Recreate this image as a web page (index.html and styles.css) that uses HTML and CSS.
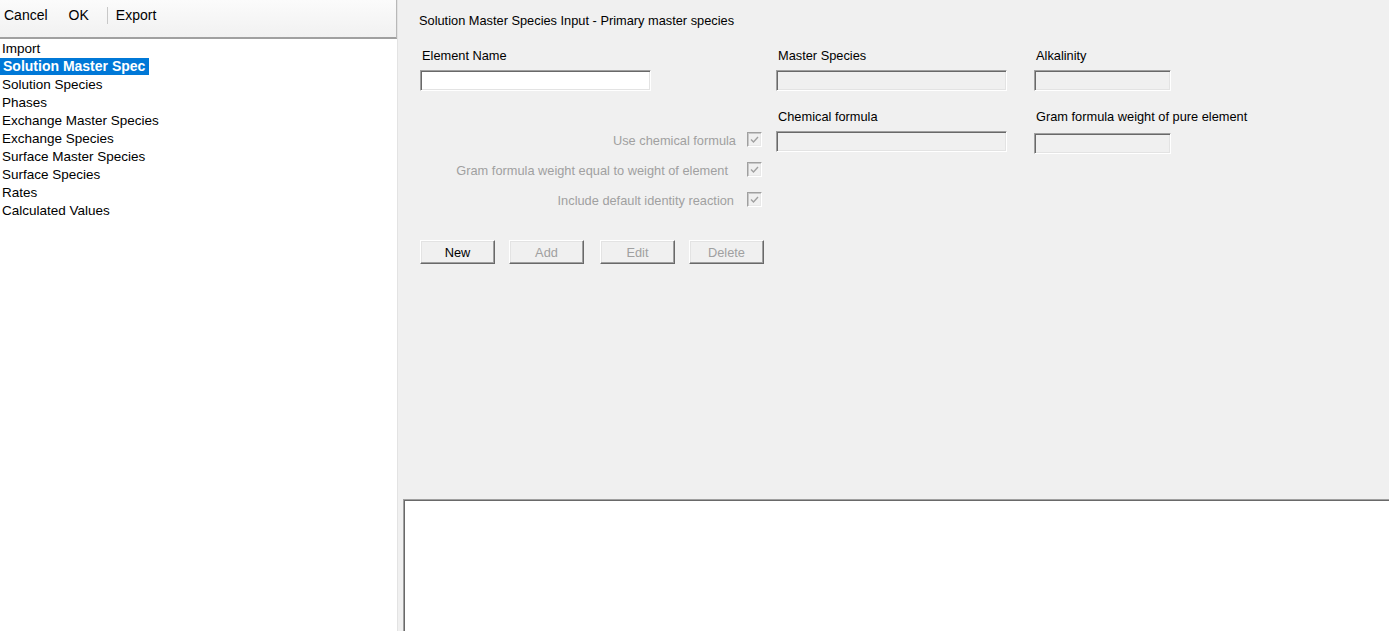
FILE: index.html
```html
<!DOCTYPE html>
<html>
<head>
<meta charset="utf-8">
<link rel="stylesheet" href="styles.css">
</head>
<body>
<div class="app">
  <aside class="side">
    <div class="toolbar">
      <span class="tb-item tb-cancel">Cancel</span>
      <span class="tb-item tb-ok">OK</span>
      <span class="tb-sep"></span>
      <span class="tb-item tb-export">Export</span>
    </div>
    <ul class="tree">
      <li class="tree-item">Import</li>
      <li class="tree-item"><span class="tree-sel">Solution Master Spec</span></li>
      <li class="tree-item">Solution Species</li>
      <li class="tree-item">Phases</li>
      <li class="tree-item">Exchange Master Species</li>
      <li class="tree-item">Exchange Species</li>
      <li class="tree-item">Surface Master Species</li>
      <li class="tree-item">Surface Species</li>
      <li class="tree-item">Rates</li>
      <li class="tree-item">Calculated Values</li>
    </ul>
  </aside>
  <main class="pane">
    <section class="form">
      <div class="title">Solution Master Species Input - Primary master species</div>
      <div class="row row-1">
        <div class="field">
          <div class="label">Element Name</div>
          <div class="input input-wide"></div>
        </div>
        <div class="field">
          <div class="label">Master Species</div>
          <div class="input input-wide input-disabled"></div>
        </div>
        <div class="field">
          <div class="label">Alkalinity</div>
          <div class="input input-narrow input-disabled"></div>
        </div>
      </div>
      <div class="row row-2">
        <div class="checks">
          <div class="check check-a"><span class="check-label">Use chemical formula</span><span class="box"><svg viewBox="0 0 9 9" width="9" height="9"><path d="M1 4.5 L3.5 7 L8 2" fill="none" stroke="#a0a0a0" stroke-width="1.4"/></svg></span></div>
          <div class="check check-b"><span class="check-label">Gram formula weight equal to weight of element</span><span class="box"><svg viewBox="0 0 9 9" width="9" height="9"><path d="M1 4.5 L3.5 7 L8 2" fill="none" stroke="#a0a0a0" stroke-width="1.4"/></svg></span></div>
          <div class="check check-c"><span class="check-label">Include default identity reaction</span><span class="box"><svg viewBox="0 0 9 9" width="9" height="9"><path d="M1 4.5 L3.5 7 L8 2" fill="none" stroke="#a0a0a0" stroke-width="1.4"/></svg></span></div>
        </div>
        <div class="field field-2">
          <div class="label">Chemical formula</div>
          <div class="input input-wide input-disabled"></div>
        </div>
        <div class="field field-2 field-gfw">
          <div class="label">Gram formula weight of pure element</div>
          <div class="input input-narrow input-disabled"></div>
        </div>
      </div>
      <div class="buttons">
        <span class="btn">New</span>
        <span class="btn btn-off">Add</span>
        <span class="btn btn-off btn-edit">Edit</span>
        <span class="btn btn-off">Delete</span>
      </div>
    </section>
    <section class="output"></section>
  </main>
</div>
</body>
</html>
```

FILE: styles.css
```css
html, body {
  margin: 0;
  padding: 0;
  height: 100%;
  overflow: hidden;
}
body {
  font-family: "Liberation Sans", Arial, sans-serif;
  font-size: 13px;
  color: #000;
  background: #f0f0f0;
}
.app {
  display: flex;
  height: 631px;
}
.side {
  width: 397px;
  flex: none;
  background: #fff;
  border-right: 1px solid #e3e3e3;
  display: flex;
  flex-direction: column;
}
.toolbar {
  box-sizing: border-box;
  height: 39px;
  padding: 6px 0 0 4px;
  display: flex;
  align-items: flex-start;
  background: linear-gradient(#fbfbfb, #f1f1f1);
  border-bottom: 2px solid #a0a0a0;
  border-right: 1px solid #b8b8b8;
}
.tb-item {
  font-size: 14px;
  line-height: 18px;
  color: #000;
}
.tb-cancel { margin-right: 21px; }
.tb-ok { margin-right: 18px; }
.tb-sep {
  width: 1px;
  height: 17px;
  margin-top: 1px;
  background: #c8c8c8;
  margin-right: 8px;
}
.tree {
  list-style: none;
  margin: 0;
  padding: 1px 0 0 0;
  font-size: 13.5px;
}
.tree-item {
  height: 18px;
  line-height: 18px;
  padding-left: 2px;
  white-space: nowrap;
}
.tree-sel {
  display: inline-block;
  box-sizing: border-box;
  margin-left: -2px;
  padding: 0 1px 0 3px;
  min-width: 149px;
  height: 17px;
  margin-top: 0;
  line-height: 17px;
  background: #0078d7;
  color: #fff;
  font-weight: bold;
  font-size: 14px;
  vertical-align: top;
}
.pane {
  flex: 1;
  display: flex;
  flex-direction: column;
  background: #f0f0f0;
}
.form {
  flex: 1;
  padding: 13px 0 0 22px;
  font-size: 12.8px;
}
.title {
  line-height: 15px;
  height: 15px;
  margin-left: -1px;
}
.row {
  display: grid;
  grid-template-columns: 356px 258px 1fr;
}
.row-1 { margin-top: 20px; }
.label {
  line-height: 15px;
  height: 15px;
  padding-left: 2px;
}
.input {
  box-sizing: border-box;
  height: 21px;
  margin-top: 7px;
  background: #fff;
  border-top: 1px solid #a0a0a0;
  border-left: 1px solid #a0a0a0;
  border-bottom: 1px solid #fff;
  border-right: 1px solid #fff;
  box-shadow: inset 1px 1px 0 #696969, inset -1px -1px 0 #e3e3e3;
}
.input-wide { width: 231px; }
.input-narrow { width: 137px; }
.input-disabled { background: #f0f0f0; }
.field-2 .label { margin-top: 18px; }
.field-gfw .input { margin-top: 9px; }
.checks {
  padding-top: 42px;
  padding-right: 14px;
  display: flex;
  flex-direction: column;
  gap: 15px;
}
.check {
  display: flex;
  justify-content: flex-end;
  align-items: center;
  height: 15px;
}
.check-label {
  color: #a0a0a0;
  line-height: 15px;
}
.check-a .check-label { margin-right: 11px; }
.check-b .check-label { margin-right: 19px; }
.check-c .check-label { margin-right: 13px; }
.box {
  box-sizing: border-box;
  width: 15px;
  height: 15px;
  margin-top: -2px;
  background: #f0f0f0;
  border-top: 1px solid #a0a0a0;
  border-left: 1px solid #a0a0a0;
  border-bottom: 1px solid #fff;
  border-right: 1px solid #fff;
  box-shadow: inset 1px 1px 0 #c8c8c8, inset -1px -1px 0 #e8e8e8;
  display: flex;
  align-items: center;
  justify-content: center;
}
.buttons {
  display: flex;
  gap: 14px;
  margin-top: 32px;
}
.btn {
  box-sizing: border-box;
  width: 75px;
  height: 24px;
  line-height: 23px;
  text-align: center;
  background: #f0f0f0;
  border-top: 1px solid #fff;
  border-left: 1px solid #fff;
  border-bottom: 1px solid #696969;
  border-right: 1px solid #696969;
  box-shadow: inset -1px -1px 0 #a0a0a0, inset 1px 1px 0 #e3e3e3;
}
.btn-off { color: #a0a0a0; }
.btn-edit { margin-left: 2px; }
.output {
  height: 132px;
  margin-left: 5px;
  box-sizing: border-box;
  background: #fff;
  border-top: 1px solid #a0a0a0;
  border-left: 1px solid #a0a0a0;
  box-shadow: inset 1px 1px 0 #696969;
}
```
